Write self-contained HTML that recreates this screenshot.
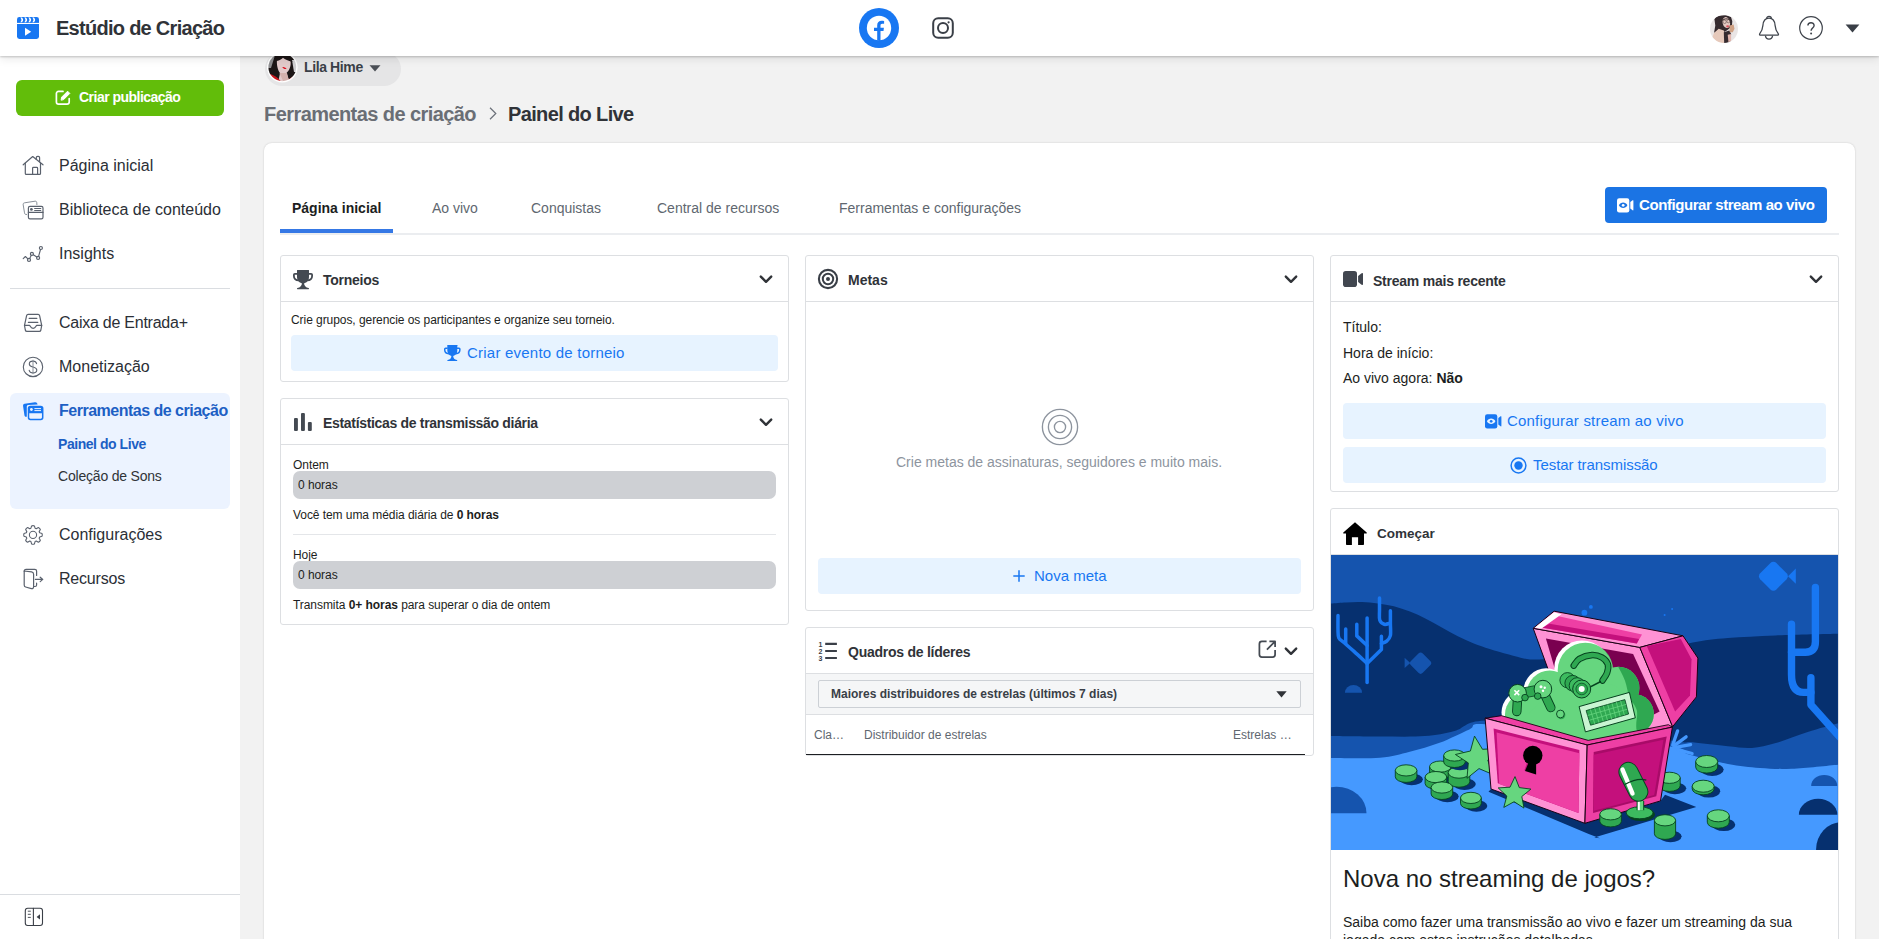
<!DOCTYPE html>
<html lang="pt-BR">
<head>
<meta charset="utf-8">
<title>Estúdio de Criação</title>
<style>
*{box-sizing:border-box;margin:0;padding:0}
html,body{width:1879px;height:939px;overflow:hidden;background:#f2f2f2;font-family:"Liberation Sans",sans-serif;color:#1c1e21}
.abs{position:absolute}
.t{position:absolute;white-space:nowrap;line-height:1}
#hdr{position:absolute;left:0;top:0;width:1879px;height:56px;background:#fff;box-shadow:0 1px 2px rgba(0,0,0,.2),0 3px 9px rgba(0,0,0,.09);z-index:10}
#side{position:absolute;left:0;top:56px;width:240px;height:883px;background:#fff;z-index:5}
#main{position:absolute;left:0;top:0;width:1879px;height:939px;overflow:hidden;z-index:1}
.nav{position:absolute;left:59px;font-size:16px;color:#2b2f36;white-space:nowrap;line-height:20px}
.ico{position:absolute;overflow:visible}
.w{position:absolute;background:#fff;border:1px solid #dddfe2;border-radius:3px}
.wh{position:absolute;left:0;right:0;top:0;height:46px;border-bottom:1px solid #dddfe2}
.wt{position:absolute;left:42px;top:15px;font-size:14px;font-weight:bold;color:#303338;white-space:nowrap;line-height:18px}
.btnl{position:absolute;background:#e7f3ff;border-radius:4px;color:#1877f2;font-size:15px;text-align:center;white-space:nowrap}
.wt2{font-size:14px;font-weight:bold;color:#303338}
.sm2{font-size:12px;letter-spacing:-0.06px;color:#1c1e21}
.sm{position:absolute;font-size:11.5px;color:#1c1e21;white-space:nowrap;line-height:14px}
.bar{position:absolute;left:11px;width:484px;height:28px;background:#ced0d4;border-radius:7px}
</style>
</head>
<body>

<!-- ================= HEADER ================= -->
<div id="hdr">
  <svg class="ico" style="left:17px;top:17px" width="22" height="22" viewBox="0 0 22 22">
    <rect x="0" y="0" width="22" height="22" rx="2.4" fill="#1877f2"/>
    <rect x="0" y="5.9" width="22" height="1.1" fill="#fff"/>
    <path d="M3.3 0.5 Q5.6 2.9 3.3 5.3 H5 Q7.3 2.9 5 0.5 Z M7.3 0.5 Q9.6 2.9 7.3 5.3 H9 Q11.3 2.9 9 0.5 Z M11.3 0.5 Q13.6 2.9 11.3 5.3 H13 Q15.3 2.9 13 0.5 Z M15.3 0.5 Q17.6 2.9 15.3 5.3 H17 Q19.3 2.9 17 0.5 Z" fill="#fff"/>
    <path d="M8 10.8 L14.2 14.8 L8 18.8 Z" fill="#fff"/>
  </svg>
  <div class="t" id="ttl" style="left:56px;top:18px;font-size:20px;font-weight:bold;color:#303338;letter-spacing:-0.72px">Estúdio de Criação</div>

  <!-- facebook -->
  <svg class="ico" style="left:859px;top:8px" width="40" height="40" viewBox="0 0 40 40">
    <circle cx="20" cy="20" r="20" fill="#1877f2"/>
    <circle cx="20" cy="20" r="12.2" fill="#fff"/>
    <path transform="translate(0 1.3)" d="M18.2 31 V21.6 h-3.2 v-3.2 h3.2 v-2.4 c0-3 1.8-4.6 4.4-4.6 1 0 2.2.1 2.5.2 v2.9 h-1.8 c-1.4 0-1.8.8-1.8 1.8 v2.1 h3.4 l-.4 3.2 h-3 V32 Z" fill="#1877f2"/>
  </svg>
  <!-- instagram -->
  <svg class="ico" style="left:932px;top:17px" width="22" height="22" viewBox="0 0 22 22" fill="none" stroke="#3a3f47" stroke-width="2">
    <rect x="1.2" y="1.2" width="19.6" height="19.6" rx="5"/>
    <circle cx="11" cy="11" r="5"/>
    <circle cx="16.6" cy="5.3" r="1.1" fill="#3a3f47" stroke="none"/>
  </svg>

  <!-- avatar -->
  <svg class="ico" style="left:1710.1px;top:14.9px" width="28" height="28" viewBox="0 0 28 28">
    <defs><clipPath id="av1"><circle cx="14" cy="14" r="14"/></clipPath><filter id="bl1" x="-10%" y="-10%" width="120%" height="120%"><feGaussianBlur stdDeviation="0.55"/></filter></defs>
    <g clip-path="url(#av1)"><g filter="url(#bl1)">
      <rect width="28" height="28" fill="#e9e5e5"/>
      <path d="M4.4 4 L6.6 1.5 L10.8 0.4 L16 0.2 L21 1.9 L22.3 6.2 L21.9 11.3 L19.4 13.4 L16.8 15.6 L13.8 17.3 L8.7 14.7 L4 18.1 L5.3 10.4 Z" fill="#352a2e"/>
      <ellipse cx="16.3" cy="7.6" rx="3.7" ry="5.6" transform="rotate(-14 16.3 7.6)" fill="#e3c8c2"/>
      <path d="M12.4 5.4 C14 3.6 17 3.4 19.4 4.6" stroke="#3a2c2c" stroke-width="1" fill="none"/>
      <circle cx="14.6" cy="6.8" r="1.7" fill="none" stroke="#4a3c3a" stroke-width=".5"/><circle cx="18.4" cy="6.2" r="1.6" fill="none" stroke="#4a3c3a" stroke-width=".5"/>
      <path d="M4 18.1 L8.7 13.8 L13.8 15.6 L15.1 19 L14.2 28.3 L7.9 27.5 L2.3 22.4 Z" fill="#e6c9bb"/>
      <path d="M13.8 17.3 L19.4 15.6 L21.1 19 L20.2 27.5 L14.2 28.3 Z" fill="#352a2e"/>
      <path d="M17.7 19.8 L21.1 19 L21.1 25.8 L18.5 27.5 Z" fill="#e2b6ae"/>
      <path d="M19.4 10.4 L23.6 9.6 L24.5 13.8 L22.8 17.3 L19.8 17.3 Z" fill="#cfa184"/>
      <ellipse cx="17.6" cy="11.3" rx="1.5" ry="1.1" fill="#d9525e"/>
    </g></g>
  </svg>
  <!-- bell -->
  <svg class="ico" style="left:1758px;top:15px" width="22" height="26" viewBox="0 0 22 26" fill="none" stroke="#3f444c" stroke-width="1.3">
    <path d="M11 3.2 C6.8 3.2 5.2 6.6 4.9 10.5 C4.6 14.5 3.4 16.6 1.8 18.6 C1.2 19.4 1.6 20.2 2.6 20.2 H19.4 C20.4 20.2 20.8 19.4 20.2 18.6 C18.6 16.6 17.4 14.5 17.1 10.5 C16.8 6.6 15.2 3.2 11 3.2 Z"/>
    <path d="M8.6 3.6 C8.6 0.6 13.4 0.6 13.4 3.6"/>
    <path d="M7.4 20.6 C8 25.2 14 25.2 14.6 20.6"/>
  </svg>
  <!-- help -->
  <svg class="ico" style="left:1799px;top:16px" width="24" height="24" viewBox="0 0 24 24" fill="none" stroke="#3f444c" stroke-width="1.2">
    <circle cx="12" cy="12" r="11.3"/>
    <path d="M8.9 9.6 C8.9 5.8 15.1 5.8 15.1 9.5 C15.1 12 12.1 12.2 12.1 14.8" stroke-width="1.4"/>
    <circle cx="12.1" cy="17.4" r="1" fill="#3f444c" stroke="none"/>
  </svg>
  <svg class="ico" style="left:1845px;top:24px" width="15" height="9" viewBox="0 0 15 9"><path d="M0.6 0.4 H14.4 L7.5 8.4 Z" fill="#3a3f47"/></svg>
</div>

<!-- ================= SIDEBAR ================= -->
<div id="side">
  <div class="abs" style="left:10px;top:337px;width:220px;height:116px;background:#ecf3ff;border-radius:6px"></div>
  <div class="abs" style="left:16px;top:24px;width:208px;height:36px;background:#62bd0a;border-radius:6px"></div>
  <svg class="ico" style="left:55px;top:33px" width="17" height="17" viewBox="0 0 17 17" fill="none" stroke="#fff" stroke-width="1.7" stroke-linecap="round" stroke-linejoin="round">
    <path d="M8 2.4 H3.6 C2.3 2.4 1.4 3.3 1.4 4.6 V13 C1.4 14.3 2.3 15.2 3.6 15.2 H12 C13.3 15.2 14.2 14.3 14.2 13 V9.6"/>
    <path d="M6.2 10.8 L6.6 8.2 L12.6 2.2 L14.8 4.4 L8.8 10.4 Z" fill="#fff" stroke-width="1"/>
  </svg>
  <div class="t" id="criar" style="left:79px;top:34px;font-size:14px;font-weight:bold;color:#fff;letter-spacing:-0.52px">Criar publicação</div>


  <svg class="ico" style="left:0;top:0" width="240" height="883" viewBox="0 56 240 883" fill="none" stroke="#5a616d" stroke-width="1.2" stroke-linecap="round" stroke-linejoin="round">
    <!-- home -->
    <path d="M23.2 164.8 L32.7 156.5 L43 164.8"/>
    <path d="M25.3 163.2 V173.4 Q25.3 174.4 26.3 174.4 H39.5 Q40.5 174.4 40.5 173.4 V163.2"/>
    <path d="M32.6 174.4 V168.2 Q32.6 167.4 33.4 167.4 H36.8 Q37.6 167.4 37.6 168.2 V174.4"/>
    <path d="M36.3 159.4 V157.6 Q36.3 156.3 37.6 156.3 H38.3 Q39.6 156.3 39.6 157.6 V161.8"/>
    <!-- library -->
    <rect x="28.4" y="206.3" width="14.6" height="12.5" rx="1.6"/>
    <path d="M28.4 212.4 H43"/>
    <circle cx="31.4" cy="209.4" r="1.4" fill="#5a616d" stroke="none"/>
    <path d="M34.6 208.5 H40.8 M34.6 210.5 H40.8" stroke-width="1"/>
    <path d="M26.6 214.5 C24.9 214.6 24.7 214 24.5 212.8 L23.2 204.9 C23 203.6 23.4 203 24.6 202.8 L35 201.2 C36.3 201 36.7 201.8 36.8 202.8 L36.9 204.6" stroke-width=".9" stroke="#7b828c"/>
    <!-- insights -->
    <path d="M23.2 258.6 L25.4 256.5 L27.9 258.8 M29.7 258.4 L31.3 255.3 M33.3 254.7 L36.8 257 M38.6 256.4 L40.5 249.5" stroke-width="1.1"/>
    <circle cx="29" cy="259.9" r="1.5"/><circle cx="31.9" cy="253.9" r="1.5"/><circle cx="38.1" cy="257.9" r="1.5"/><circle cx="40.9" cy="248" r="1.5"/>
    <!-- inbox -->
    <path d="M24.5 325.3 L26.6 315.6 Q26.9 314.4 28.1 314.4 H38.1 Q39.3 314.4 39.6 315.6 L41.7 325.3"/>
    <path d="M24.5 325.3 H29.4 C30.4 325.3 30.2 328.3 33.1 328.3 C36 328.3 35.8 325.3 36.8 325.3 H41.7 L40.9 330 Q40.6 331.4 39.2 331.4 H27 Q25.6 331.4 25.3 330 Z"/>
    <path d="M29.2 318.4 H36.8 M28.4 322.4 H37.8"/>
    <!-- dollar -->
    <circle cx="33" cy="366.9" r="9.7" stroke-width="1.1"/>
    <path d="M36.6 363.6 C36.2 361.9 34.7 361.1 33 361.1 C30.9 361.1 29.3 362.2 29.3 363.9 C29.3 368 36.8 365.9 36.8 370 C36.8 371.8 35.1 372.9 33 372.9 C31.1 372.9 29.6 372 29.2 370.3" stroke-width="1.1"/>
    <path d="M33 360.2 V373.8" stroke-width="1" stroke="#8a9099"/>
    <!-- gear -->
    <path d="M30.93 528.21 L31.60 525.91 Q33.00 525.25 34.40 525.91 L35.07 528.21 A7.0 7.0 0 0 1 36.27 528.71 L36.27 528.71 L38.36 527.55 Q39.82 528.08 40.35 529.54 L39.19 531.63 A7.0 7.0 0 0 1 39.69 532.83 L39.69 532.83 L41.99 533.50 Q42.65 534.90 41.99 536.30 L39.69 536.97 A7.0 7.0 0 0 1 39.19 538.17 L39.19 538.17 L40.35 540.26 Q39.82 541.72 38.36 542.25 L36.27 541.09 A7.0 7.0 0 0 1 35.07 541.59 L35.07 541.59 L34.40 543.89 Q33.00 544.55 31.60 543.89 L30.93 541.59 A7.0 7.0 0 0 1 29.73 541.09 L29.73 541.09 L27.64 542.25 Q26.18 541.72 25.65 540.26 L26.81 538.17 A7.0 7.0 0 0 1 26.31 536.97 L26.31 536.97 L24.01 536.30 Q23.35 534.90 24.01 533.50 L26.31 532.83 A7.0 7.0 0 0 1 26.81 531.63 L26.81 531.63 L25.65 529.54 Q26.18 528.08 27.64 527.55 L29.73 528.71 A7.0 7.0 0 0 1 30.93 528.21 Z" stroke-width="1.1"/>
    <circle cx="33" cy="534.9" r="3.6" stroke-width="1.1"/>
    <!-- door -->
    <path d="M24.2 571.2 Q24.2 569.3 26.1 569.3 H34.8 Q36.6 569.3 36.6 571.1 V575.5"/>
    <path d="M36.6 583.2 V585 Q36.6 586.5 35.1 586.5 H33.8"/>
    <path d="M24.2 571 L31.6 571.8 Q33.6 572.2 33.6 574.2 V586.6 Q33.6 589 31.4 588.6 L25.6 587 Q24.2 586.6 24.2 585 Z"/>
    <path d="M35.4 579.4 H42.6 M40.2 577.2 L42.8 579.4 L40.2 581.6"/>
    <!-- collapse -->
    <rect x="25.3" y="908.3" width="17.2" height="17.2" rx="2.4" stroke="#3a3f47" stroke-width="1.1"/>
    <path d="M33.4 908.3 V925.5" stroke="#3a3f47" stroke-width="1.1"/>
    <path d="M27.8 911.2 H30.8 M27.8 914.3 H30.8 M27.8 917.4 H30.8" stroke="#3a3f47" stroke-width=".9" stroke-linecap="butt"/>
    <path d="M36.6 916.9 L40 914.2 V919.6 Z" fill="#3a3f47" stroke="none"/>
  </svg>
  <!-- active icon -->
  <svg class="ico" style="left:0;top:0" width="240" height="883" viewBox="0 56 240 883">
    <path d="M26.8 416.8 C24.9 417 24.6 416.2 24.4 415 L23.1 406.2 C22.9 404.9 23.4 404 24.7 403.8 L34.9 402.2 C36.3 402 37.2 402.6 37.6 404.4 L28 404.9 Q26.8 405 26.8 406.2 Z" fill="#1877f2"/>
    <rect x="28.5" y="406.4" width="14.2" height="13" rx="1.9" fill="none" stroke="#1877f2" stroke-width="1.5"/>
    <path d="M28.5 408.3 Q28.5 406.4 30.4 406.4 H40.8 Q42.7 406.4 42.7 408.3 V413.2 H28.5 Z" fill="#1877f2"/>
    <circle cx="31.4" cy="409.5" r="1.4" fill="#eaf3ff"/>
    <path d="M34.4 408.6 H41 M34.4 410.6 H41" stroke="#eaf3ff" stroke-width="1"/>
  </svg>
  <!-- nav text -->
  <div class="nav" id="n1" style="top:100px">Página inicial</div>
  <div class="nav" id="n2" style="top:144px">Biblioteca de conteúdo</div>
  <div class="nav" id="n3" style="top:188px">Insights</div>
  <div class="abs" style="left:10px;top:232px;width:220px;height:1px;background:#dadde1"></div>
  <div class="nav" id="n4" style="letter-spacing:-0.25px;top:257px">Caixa de Entrada+</div>
  <div class="nav" id="n5" style="top:301px">Monetização</div>
  <div class="nav" id="n6" style="letter-spacing:-0.5px;top:345px;font-weight:bold;color:#1d5fc4">Ferramentas de criação</div>
  <div class="nav" id="n7" style="letter-spacing:-0.45px;top:378px;left:58px;font-size:14px;font-weight:bold;color:#1d5fc4">Painel do Live</div>
  <div class="nav" id="n8" style="letter-spacing:-0.2px;top:410px;left:58px;font-size:14px;color:#303338">Coleção de Sons</div>
  <div class="nav" id="n9" style="top:469px">Configurações</div>
  <div class="nav" id="n10" style="letter-spacing:-0.2px;top:513px">Recursos</div>

  <div class="abs" style="left:0;top:838px;width:240px;height:1px;background:#dadde1"></div>
</div>

<!-- ================= MAIN ================= -->
<div id="main">
  <!-- page selector pill -->
  <div class="abs" style="left:265px;top:51.5px;width:136px;height:34px;border-radius:17px;background:#e5e5e6"></div>
  <svg class="ico" style="left:267.2px;top:52.2px" width="30.6" height="30.6" viewBox="0 0 30.6 30.6">
    <defs><clipPath id="av2"><circle cx="15.3" cy="15.3" r="13.9"/></clipPath><filter id="bl2" x="-10%" y="-10%" width="120%" height="120%"><feGaussianBlur stdDeviation="0.5"/></filter></defs>
    <circle cx="15.3" cy="15.3" r="15.3" fill="#fff"/>
    <g clip-path="url(#av2)"><g filter="url(#bl2)">
      <rect width="30.6" height="30.6" fill="#1b1517"/>
      <path d="M0 0 H9 L4 16 H0 Z" fill="#8e8e90"/>
      <path d="M25 8 H31 V20 H27 Z" fill="#cfcfd1"/>
      <path d="M10 8 C11 4 22 4 23.5 9 C24.5 14 22 19 19.5 21 L23 31 H11 L13 21 C10.5 18 9.5 12 10 8 Z" fill="#e2caca"/>
      <path d="M8 9 C10 3 23 2 25.5 10 C21 8.6 18 7.6 16 5.8 C14 8 11 9.4 8 9 Z" fill="#1b1517"/>
      <path d="M12.5 21 L17 31 H22.5 L20 21 Z" fill="#d4b1ad"/>
      <path d="M3 22 C7 23 12 26 15 31 H2 Z" fill="#c9141f"/>
      <path d="M22 27 L27 24 L28 31 H21 Z" fill="#c9141f"/>
      <path d="M15.4 15.3 C16.6 14.6 18.2 15.6 19.6 16.9 C18 17.4 16.2 16.8 15.4 15.3 Z" fill="#dd0f1e"/>
    </g></g>
  </svg>
  <div class="t" id="lila" style="left:304px;top:60px;font-size:14px;font-weight:bold;color:#3a3f47;letter-spacing:-0.38px">Lila Hime</div>
  <svg class="ico" style="left:369px;top:65px" width="12" height="7" viewBox="0 0 12 7"><path d="M0.5 0.3 H11.5 L6 6.6 Z" fill="#4b4f56"/></svg>

  <!-- breadcrumb -->
  <div class="t" id="bc1" style="left:264px;top:104px;font-size:20px;font-weight:bold;color:#6a6e75;letter-spacing:-0.57px">Ferramentas de criação</div>
  <svg class="ico" style="left:489px;top:107px" width="8" height="13" viewBox="0 0 8 13" fill="none" stroke="#6b7079" stroke-width="1.2"><path d="M1 0.8 L6.8 6.5 L1 12.2"/></svg>
  <div class="t" id="bc2" style="left:508px;top:104px;font-size:20px;font-weight:bold;color:#303338;letter-spacing:-0.64px">Painel do Live</div>

  <!-- big card -->
  <div id="card" class="abs" style="left:264px;top:143px;width:1591px;height:820px;background:#fff;border-radius:8px;box-shadow:0 0 2px rgba(0,0,0,.18)"></div>

  <!-- TABS -->
  <div class="t" id="tb1" style="left:292px;top:201px;font-size:14px;font-weight:bold;color:#1c1e21">Página inicial</div>
  <div class="t" id="tb2" style="left:432px;top:201px;font-size:14px;color:#606770">Ao vivo</div>
  <div class="t" id="tb3" style="left:531px;top:201px;font-size:14px;color:#606770">Conquistas</div>
  <div class="t" id="tb4" style="left:657px;top:201px;font-size:14px;color:#606770">Central de recursos</div>
  <div class="t" id="tb5" style="left:839px;top:201px;font-size:14px;color:#606770">Ferramentas e configurações</div>
  <div class="abs" style="left:280px;top:233px;width:1559px;height:1.5px;background:#ebedf0"></div>
  <div class="abs" style="left:280px;top:229px;width:113px;height:4px;background:#3578e5"></div>

  <!-- top button -->
  <div class="abs" style="left:1605px;top:187px;width:222px;height:36px;background:#1b74e4;border-radius:4px"></div>
  <svg class="ico" style="left:1617px;top:198px" width="17" height="15" viewBox="0 0 17 15" fill="#fff">
    <rect x="0" y="0.2" width="12.3" height="14.2" rx="2.2"/><path d="M13.3 4 L15.6 2.3 Q16.4 1.9 16.4 2.8 V11.8 Q16.4 12.7 15.6 12.3 L13.3 10.6 Z"/>
    <path d="M1.9 7.3 C3.6 3.6 8.7 3.6 10.4 7.3 C8.7 11 3.6 11 1.9 7.3 Z" fill="#1b74e4"/><circle cx="6.15" cy="7.3" r="1.35"/>
  </svg>
  <div class="t" id="topbtn" style="left:1639px;top:196.7px;font-size:15px;font-weight:bold;color:#fff;letter-spacing:-0.42px">Configurar stream ao vivo</div>


  <!-- ===== Torneios ===== -->
  <div class="w" style="left:280px;top:255px;width:509px;height:127px"></div>
  <div class="abs" style="left:281px;top:301px;width:507px;height:1px;background:#dddfe2"></div>
  <svg class="ico" style="left:293px;top:270px" width="20" height="19.2" viewBox="0 0 20 19.2" fill="#444a52">
    <path d="M4 0.3 Q4 0 4.3 0 H15.7 Q16 0 16 0.3 V7 C16 10.8 13.6 13 10 13.6 C6.4 13 4 10.8 4 7 Z"/>
    <path d="M4.4 3.8 H1.9 Q0.9 3.8 0.9 4.8 V6 C0.9 8.6 2.8 10.3 5.8 10.4 M15.6 3.8 H18.1 Q19.1 3.8 19.1 4.8 V6 C19.1 8.6 17.2 10.3 14.2 10.4" fill="none" stroke="#444a52" stroke-width="1.8"/>
    <path d="M9 12.6 C9 15.8 7.2 17.7 4.4 18 Q4 18.05 4 18.5 V18.8 Q4 19.2 4.4 19.2 H15.6 Q16 19.2 16 18.8 V18.5 Q16 18.05 15.6 18 C12.8 17.7 11 15.8 11 12.6 Z"/>
  </svg>
  <div class="t wt2" id="w1t" style="left:323px;top:272.5px;letter-spacing:-0.25px">Torneios</div>
  <svg class="ico" style="left:759px;top:275px" width="14" height="9" viewBox="0 0 14 9" fill="none" stroke="#303338" stroke-width="2.4" stroke-linecap="round" stroke-linejoin="round"><path d="M1.8 1.6 L7 6.8 L12.2 1.6"/></svg>
  <div class="t" id="w1d" style="left:291px;top:314px;font-size:12px;color:#1c1e21;letter-spacing:-0.06px">Crie grupos, gerencie os participantes e organize seu torneio.</div>
  <div class="abs" style="left:291px;top:335px;width:487px;height:36px;background:#e7f3ff;border-radius:4px"></div>
  <svg class="ico" style="left:444.3px;top:345px" width="16.6" height="16" viewBox="0 0 20 19.2" fill="#1877f2">
    <path d="M4 0.3 Q4 0 4.3 0 H15.7 Q16 0 16 0.3 V7 C16 10.8 13.6 13 10 13.6 C6.4 13 4 10.8 4 7 Z"/>
    <path d="M4.4 3.8 H1.9 Q0.9 3.8 0.9 4.8 V6 C0.9 8.6 2.8 10.3 5.8 10.4 M15.6 3.8 H18.1 Q19.1 3.8 19.1 4.8 V6 C19.1 8.6 17.2 10.3 14.2 10.4" fill="none" stroke="#1877f2" stroke-width="1.8"/>
    <path d="M9 12.6 C9 15.8 7.2 17.7 4.4 18 Q4 18.05 4 18.5 V18.8 Q4 19.2 4.4 19.2 H15.6 Q16 19.2 16 18.8 V18.5 Q16 18.05 15.6 18 C12.8 17.7 11 15.8 11 12.6 Z"/>
  </svg>
  <div class="t" id="w1b" style="left:467px;top:345px;font-size:15px;color:#1877f2;letter-spacing:0.22px">Criar evento de torneio</div>

  <!-- ===== Estatísticas ===== -->
  <div class="w" style="left:280px;top:398px;width:509px;height:227px"></div>
  <div class="abs" style="left:281px;top:444px;width:507px;height:1px;background:#dddfe2"></div>
  <svg class="ico" style="left:294px;top:413px" width="18" height="18" viewBox="0 0 18 18" fill="#444a52">
    <rect x="0" y="5" width="3.9" height="13" rx="1.1"/><rect x="7" y="0" width="3.9" height="18" rx="1.1"/><rect x="13.9" y="9" width="3.9" height="9" rx="1.1"/>
  </svg>
  <div class="t wt2" id="w2t" style="left:323px;top:415.5px;letter-spacing:-0.32px">Estatísticas de transmissão diária</div>
  <svg class="ico" style="left:759px;top:418px" width="14" height="9" viewBox="0 0 14 9" fill="none" stroke="#303338" stroke-width="2.4" stroke-linecap="round" stroke-linejoin="round"><path d="M1.8 1.6 L7 6.8 L12.2 1.6"/></svg>
  <div class="t sm2" id="w2a" style="left:293px;top:459px">Ontem</div>
  <div class="abs" style="left:293px;top:471px;width:483px;height:28px;background:#ced0d4;border-radius:7px"></div>
  <div class="t sm2" id="w2b" style="left:298px;top:479px">0 horas</div>
  <div class="t sm2" id="w2c" style="left:293px;top:509px">Você tem uma média diária de <b>0 horas</b></div>
  <div class="abs" style="left:293px;top:534px;width:483px;height:1px;background:#e4e6e9"></div>
  <div class="t sm2" id="w2d" style="left:293px;top:549px">Hoje</div>
  <div class="abs" style="left:293px;top:561px;width:483px;height:28px;background:#ced0d4;border-radius:7px"></div>
  <div class="t sm2" id="w2e" style="left:298px;top:569px">0 horas</div>
  <div class="t sm2" id="w2f" style="left:293px;top:599px">Transmita <b>0+ horas</b> para superar o dia de ontem</div>

  <!-- ===== Metas ===== -->
  <div class="w" style="left:805px;top:255px;width:509px;height:356px"></div>
  <div class="abs" style="left:806px;top:301px;width:507px;height:1px;background:#dddfe2"></div>
  <svg class="ico" style="left:817px;top:268px" width="22" height="22" viewBox="0 0 22 22" fill="none" stroke="#3a3f47">
    <circle cx="11" cy="11" r="9.1" stroke-width="2.1"/><circle cx="11" cy="11" r="5.2" stroke-width="2"/><circle cx="11" cy="11" r="2" fill="#3a3f47" stroke="none"/>
  </svg>
  <div class="t wt2" id="w3t" style="left:848px;top:272.5px;letter-spacing:0px">Metas</div>
  <svg class="ico" style="left:1284px;top:275px" width="14" height="9" viewBox="0 0 14 9" fill="none" stroke="#303338" stroke-width="2.4" stroke-linecap="round" stroke-linejoin="round"><path d="M1.8 1.6 L7 6.8 L12.2 1.6"/></svg>
  <svg class="ico" style="left:1041px;top:408px" width="38" height="38" viewBox="0 0 38 38" fill="none" stroke="#8d949e" stroke-width="1.35">
    <circle cx="19" cy="19" r="17.6"/><circle cx="19" cy="19" r="11.6"/><circle cx="19" cy="19" r="5.6"/>
  </svg>
  <div class="t" id="w3d" style="left:896px;top:455px;font-size:14px;color:#8d949e">Crie metas de assinaturas, seguidores e muito mais.</div>
  <div class="abs" style="left:818px;top:558px;width:483px;height:36px;background:#e7f3ff;border-radius:4px"></div>
  <svg class="ico" style="left:1013px;top:570px" width="12" height="12" viewBox="0 0 12 12" stroke="#1877f2" stroke-width="1.5"><path d="M6 0.3 V11.7 M0.3 6 H11.7"/></svg>
  <div class="t" id="w3b" style="left:1034px;top:568px;font-size:15px;color:#1877f2">Nova meta</div>

  <!-- ===== Quadros de líderes ===== -->
  <div class="w" style="left:805px;top:627px;width:509px;height:129px"></div>
  <div class="abs" style="left:806px;top:673px;width:507px;height:42px;background:#f5f6f7;border-top:1px solid #dddfe2;border-bottom:1px solid #dddfe2"></div>
  <svg class="ico" style="left:818px;top:640px" width="20" height="23" viewBox="0 0 20 23">
    <path d="M7.2 3.9 H18.9 M7.2 11 H18.9 M7.2 18 H18.9" stroke="#3a3f47" stroke-width="2.1" fill="none"/>
    <text x="0.6" y="6.9" font-family="Liberation Sans, sans-serif" font-size="7" font-weight="bold" fill="#3a3f47">1</text>
    <text x="0.6" y="13.9" font-family="Liberation Sans, sans-serif" font-size="7" font-weight="bold" fill="#3a3f47">2</text>
    <text x="0.6" y="21" font-family="Liberation Sans, sans-serif" font-size="7" font-weight="bold" fill="#3a3f47">3</text>
  </svg>
  <div class="t wt2" id="w4t" style="left:848px;top:644.6px;letter-spacing:-0.25px">Quadros de líderes</div>
  <svg class="ico" style="left:1257.6px;top:639.6px" width="19" height="19" viewBox="0 0 19 19" fill="none" stroke="#444a52" stroke-width="1.75" stroke-linejoin="round">
    <path d="M8.6 1.4 H3.9 Q1.4 1.4 1.4 3.9 V14.6 Q1.4 17.1 3.9 17.1 H14.6 Q17.1 17.1 17.1 14.6 V10"/>
    <path d="M11.4 1.4 H17.1 V7.1 M17.1 1.4 L8.9 9.6"/>
  </svg>
  <svg class="ico" style="left:1284px;top:646.8px" width="14" height="9" viewBox="0 0 14 9" fill="none" stroke="#303338" stroke-width="2.4" stroke-linecap="round" stroke-linejoin="round"><path d="M1.8 1.6 L7 6.8 L12.2 1.6"/></svg>
  <div class="abs" style="left:818px;top:680px;width:483px;height:28px;background:#f5f6f7;border:1px solid #ccd0d5;border-radius:2px"></div>
  <div class="t" id="w4s" style="left:831px;top:688px;font-size:12px;font-weight:bold;color:#3a3f47">Maiores distribuidores de estrelas (últimos 7 dias)</div>
  <svg class="ico" style="left:1276px;top:691px" width="11" height="7" viewBox="0 0 11 7"><path d="M0.3 0.3 H10.7 L5.5 6.6 Z" fill="#303338"/></svg>
  <div class="t" id="w4a" style="left:814px;top:729px;font-size:12px;color:#606770">Cla…</div>
  <div class="t" id="w4b" style="left:864px;top:729px;font-size:12px;color:#606770">Distribuidor de estrelas</div>
  <div class="t" id="w4c" style="left:1233px;top:729px;font-size:12px;color:#606770">Estrelas …</div>
  <div class="abs" style="left:806px;top:754px;width:499px;height:1px;background:#1c1e21"></div>

  <!-- ===== Stream mais recente ===== -->
  <div class="w" style="left:1330px;top:255px;width:509px;height:237px"></div>
  <div class="abs" style="left:1331px;top:301px;width:507px;height:1px;background:#dddfe2"></div>
  <svg class="ico" style="left:1343px;top:271px" width="21" height="16" viewBox="0 0 21 16" fill="#41464f">
    <rect x="0" y="0" width="14" height="16" rx="2.8"/><path d="M15.1 4.9 L18.6 2.3 Q20 1.6 20 3 V13 Q20 14.4 18.6 13.7 L15.1 11.1 Z"/>
  </svg>
  <div class="t wt2" id="w5t" style="left:1373px;top:273.5px;letter-spacing:-0.23px">Stream mais recente</div>
  <svg class="ico" style="left:1809px;top:275px" width="14" height="9" viewBox="0 0 14 9" fill="none" stroke="#303338" stroke-width="2.4" stroke-linecap="round" stroke-linejoin="round"><path d="M1.8 1.6 L7 6.8 L12.2 1.6"/></svg>
  <div class="t" id="w5a" style="left:1343px;top:320px;font-size:14px;color:#1c1e21">Título:</div>
  <div class="t" id="w5b" style="left:1343px;top:346px;font-size:14px;color:#1c1e21">Hora de início:</div>
  <div class="t" id="w5c" style="left:1343px;top:371px;font-size:14px;color:#1c1e21">Ao vivo agora: <b>Não</b></div>
  <div class="abs" style="left:1343px;top:403px;width:483px;height:36px;background:#e7f3ff;border-radius:4px"></div>
  <svg class="ico" style="left:1485px;top:413.5px" width="17" height="15" viewBox="0 0 17 15" fill="#1877f2">
    <rect x="0" y="0.2" width="12.3" height="14.2" rx="2.2"/><path d="M13.3 4 L15.6 2.3 Q16.4 1.9 16.4 2.8 V11.8 Q16.4 12.7 15.6 12.3 L13.3 10.6 Z"/>
    <path d="M1.9 7.3 C3.6 3.6 8.7 3.6 10.4 7.3 C8.7 11 3.6 11 1.9 7.3 Z" fill="#e7f3ff"/><circle cx="6.15" cy="7.3" r="1.35"/>
  </svg>
  <div class="t" id="w5d" style="left:1507px;top:413px;font-size:15px;color:#1877f2;letter-spacing:0.2px">Configurar stream ao vivo</div>
  <div class="abs" style="left:1343px;top:447px;width:483px;height:36px;background:#e7f3ff;border-radius:4px"></div>
  <svg class="ico" style="left:1510px;top:457px" width="17" height="17" viewBox="0 0 17 17" fill="none" stroke="#1877f2" stroke-width="1.5"><circle cx="8.5" cy="8.5" r="7.4"/><circle cx="8.5" cy="8.5" r="4.2" fill="#1877f2" stroke="none"/></svg>
  <div class="t" id="w5e" style="left:1533px;top:457px;font-size:15px;color:#1877f2;letter-spacing:-0.07px">Testar transmissão</div>

  <!-- ===== Começar ===== -->
  <div class="w" style="left:1330px;top:508px;width:509px;height:460px"></div>
  <svg class="ico" style="left:1343px;top:521.8px" width="24" height="23.2" viewBox="0 0 24 23.2" fill="#000">
    <path d="M12 0.2 L23.7 10.5 Q24.3 11.4 23.3 11.4 H21 V22.3 Q21 23.1 20.2 23.1 H15.1 V15.2 H8.9 V23.1 H3.8 Q3 23.1 3 22.3 V11.4 H0.7 Q-0.3 11.4 0.3 10.5 Z"/>
  </svg>
  <div class="abs" style="left:1331px;top:554px;width:507px;height:1px;background:#dddfe2"></div>
  <div class="t" id="w6t" style="left:1377px;top:526.5px;font-size:13.5px;font-weight:bold;color:#303338">Começar</div>
<!--ILLUS_START-->
<svg class="ico" style="left:1331px;top:555px;overflow:hidden" width="507" height="295" viewBox="0 0 507 295">
<rect width="507" height="295" fill="#1554ae"/>
<path d="M-1.0 48.5 C1.7 48.3 9.7 47.6 15.0 47.4 C20.3 47.2 25.6 46.9 30.9 47.1 C36.2 47.3 41.6 47.7 46.9 48.4 C52.2 49.1 57.6 49.9 62.9 51.2 C68.2 52.6 73.6 54.4 78.9 56.5 C84.2 58.6 89.5 61.0 94.8 63.7 C100.1 66.4 105.5 69.6 110.8 72.5 C116.1 75.4 121.5 78.6 126.8 81.3 C132.1 84.0 137.5 86.4 142.8 88.5 C148.1 90.6 152.8 92.2 158.7 94.0 C164.5 95.8 171.2 97.9 177.9 99.6 C184.6 101.3 190.9 103.7 199.0 104.4 C207.1 105.1 213.7 103.8 226.4 103.8 C239.1 103.8 258.9 105.1 275.2 104.2 C291.4 103.3 309.5 101.1 323.9 98.3 C338.3 95.5 349.6 90.1 361.8 87.6 C374.0 85.1 383.1 84.3 396.9 83.1 C410.7 81.9 426.5 81.1 444.8 80.4 C463.1 79.7 496.5 79.1 506.8 78.8 L507 295 L0 295 Z" fill="#06306f"/>
<path d="M0 181 C8.2 181.1 33.4 181.5 49.0 181.5 C64.6 181.5 81.3 182.0 93.7 181.1 C106.1 180.2 113.4 178.5 123.5 175.9 C133.6 173.3 133.0 166.4 154.1 165.4 C175.2 164.4 218.5 166.6 250 170 C281.5 173.4 324.4 183.1 343 186 C361.6 188.9 352.8 186.4 361.8 187.3 C370.8 188.2 387.0 190.4 396.9 191.3 C406.8 192.2 412.9 193.4 420.9 192.9 C428.9 192.4 435.5 190.8 444.8 188.1 C454.1 185.4 466.3 180.2 476.7 176.9 C487.1 173.6 501.9 169.6 507 168.2 L507 295 L0 295 Z" fill="#1554ae"/>
<path d="M0 203 C8.2 202.9 35.9 203.8 49.0 202.7 C62.1 201.6 68.9 199.2 78.8 196.7 C88.7 194.2 98.7 191.5 108.6 187.8 C118.5 184.1 130.8 177.5 138.4 174.4 C146.0 171.3 135.5 168.3 154.1 169.2 C172.7 170.1 218.5 176.2 250 180 C281.5 183.8 325.2 188.8 343 192 C360.8 195.2 348.0 196.5 357.0 199.3 C366.0 202.1 384.9 206.6 396.9 208.9 C408.9 211.2 418.1 212.1 428.8 212.9 C439.5 213.7 447.8 214.2 460.8 213.7 C473.8 213.2 499.1 210.4 506.8 209.7 L507 295 L0 295 Z" fill="#4599ff"/>
<path d="M-24.5 258.2 A30.0 26.5 0 0 1 35.5 258.2 Z" fill="#1554ae"/>
<path d="M13.9 137.7 A8.6 7.8 0 0 1 31.1 137.7 Z" fill="#1554ae"/>
<path d="M480.2 230.9 A13.0 11.0 0 0 1 506.2 230.9 Z" fill="#1554ae"/>
<path d="M467.9 259.7 A19.2 16.0 0 0 1 506.3 259.7 Z" fill="#06306f"/>
<ellipse cx="510.6" cy="294.3" rx="25.5" ry="27" fill="#06306f"/>
<rect x="430.9" y="9.8" width="22.9" height="22.9" rx="4.2" transform="rotate(45 442.4 21.3)" fill="#1877f2"/><path d="M457.1 21.3 L464.8 13.6 V28.7 Z" fill="#1877f2"/>
<rect x="81.3" y="99.8" width="16.7" height="16.7" rx="3.1" transform="rotate(45 89.6 108.1)" fill="#1554ae"/><path d="M79.3 108.1 L73.6 102.8 V113.1 Z" fill="#1554ae"/>
<circle cx="253.4" cy="57.7" r="2.9" fill="#1877f2"/>
<circle cx="259.9" cy="51.9" r="1.9" fill="#1877f2"/>
<circle cx="333.6" cy="60.0" r="1.0" fill="#1877f2"/>
<circle cx="341.1" cy="54.1" r="1.0" fill="#1877f2"/>
<path d="M36.1 127.6 L36.1 62.9" fill="none" stroke="#1877f2" stroke-width="3.5" stroke-linecap="round" stroke-linejoin="round"/>
<path d="M36.1 108.4 C33.9 106.4 26.9 99.9 23.0 96.4 C19.1 92.9 15.1 89.5 12.6 87.3 C10.1 85.0 8.7 85.0 7.8 82.9 C6.9 80.8 7.1 78.6 7.0 74.9 C6.9 71.2 7.0 62.9 7.0 60.5" fill="none" stroke="#1877f2" stroke-width="3.5" stroke-linecap="round"/>
<path d="M14.7 74.1 L14.7 88.5" fill="none" stroke="#1877f2" stroke-width="3.5" stroke-linecap="round" stroke-linejoin="round"/>
<path d="M36.1 90.5 L25.8 80.9 L25.8 69.3" fill="none" stroke="#1877f2" stroke-width="3.5" stroke-linecap="round" stroke-linejoin="round"/>
<path d="M36.1 108.4 L50.4 94.4 L50.4 81.3" fill="none" stroke="#1877f2" stroke-width="3.5" stroke-linecap="round" stroke-linejoin="round"/>
<path d="M50.4 88.5 C51.3 88.1 54.2 87.4 55.7 86.1 C57.2 84.8 58.8 83.4 59.4 80.5 C60.0 77.6 59.4 72.6 59.4 68.5 C59.4 64.4 59.4 57.8 59.4 55.7" fill="none" stroke="#1877f2" stroke-width="3.5" stroke-linecap="round"/>
<path d="M48.5 42.9 C48.5 45.0 48.5 52.0 48.5 55.7 C48.5 59.4 48.0 63.0 48.8 65.3 C49.6 67.6 51.6 68.8 53.3 69.3 C55.0 69.8 58.0 68.4 58.9 68.2" fill="none" stroke="#1877f2" stroke-width="3.5" stroke-linecap="round"/>
<path d="M484.4 32.5 V86.8 Q484.4 97.2 474.4 97.2 H460.5" fill="none" stroke="#1877f2" stroke-width="7.4" stroke-linecap="round"/>
<path d="M460.5 69.3 V119.6 Q460.5 137.4 472.5 137.4 H479.9" fill="none" stroke="#1877f2" stroke-width="7.4" stroke-linecap="round"/>
<path d="M479.9 122.7 V149.8 L508.7 182.0" fill="none" stroke="#1877f2" stroke-width="7.4" stroke-linecap="round" stroke-linejoin="round"/>
<path d="M341.7 190.0 L346.6 175.9" fill="none" stroke="#4599ff" stroke-width="3.3" stroke-linecap="round" stroke-linejoin="round"/>
<path d="M342.9 190.8 L355.1 181.8" fill="none" stroke="#4599ff" stroke-width="3.3" stroke-linecap="round" stroke-linejoin="round"/>
<path d="M344.4 192.3 L359.6 189.6" fill="none" stroke="#4599ff" stroke-width="3.3" stroke-linecap="round" stroke-linejoin="round"/>
<path d="M347.4 194.9 L361.1 198.5" fill="none" stroke="#4599ff" stroke-width="3.3" stroke-linecap="round" stroke-linejoin="round"/>
<path d="M160.0 234.0 L157.5 236.7 L257.7 279.0 L269.0 283.2 L263.2 282.6 L365.3 251.9 L334.0 239.7 L329.5 245.9 L253.9 268.3 Z" fill="#06306f"/>
<ellipse cx="80.6" cy="224.3" rx="11.3" ry="5.8999999999999995" fill="#06306f"/><path d="M64.3 215.4 V221.8 A10.8 5.6 0 0 0 85.89999999999999 221.8 V215.4 Z" fill="#2fa851" stroke="#06421f" stroke-width=".9"/><ellipse cx="75.1" cy="215.4" rx="10.8" ry="5.6" fill="#66d67f" stroke="#06421f" stroke-width=".9"/>
<ellipse cx="114.9" cy="220.5" rx="11.3" ry="5.8999999999999995" fill="#06306f"/><path d="M98.60000000000001 211.6 V218.0 A10.8 5.6 0 0 0 120.2 218.0 V211.6 Z" fill="#2fa851" stroke="#06421f" stroke-width=".9"/><ellipse cx="109.4" cy="211.6" rx="10.8" ry="5.6" fill="#66d67f" stroke="#06421f" stroke-width=".9"/>
<ellipse cx="110.4" cy="231.0" rx="11.3" ry="5.8999999999999995" fill="#06306f"/><path d="M94.10000000000001 222.1 V228.5 A10.8 5.6 0 0 0 115.7 228.5 V222.1 Z" fill="#2fa851" stroke="#06421f" stroke-width=".9"/><ellipse cx="104.9" cy="222.1" rx="10.8" ry="5.6" fill="#66d67f" stroke="#06421f" stroke-width=".9"/>
<ellipse cx="133.5" cy="229.1" rx="11.3" ry="5.8999999999999995" fill="#06306f"/><path d="M117.2 217.6 V226.6 A10.8 5.6 0 0 0 138.8 226.6 V217.6 Z" fill="#2fa851" stroke="#06421f" stroke-width=".9"/><ellipse cx="128.0" cy="217.6" rx="10.8" ry="5.6" fill="#66d67f" stroke="#06421f" stroke-width=".9"/>
<ellipse cx="129.0" cy="209.4" rx="11.3" ry="5.8999999999999995" fill="#06306f"/><path d="M112.7 200.5 V206.9 A10.8 5.6 0 0 0 134.3 206.9 V200.5 Z" fill="#2fa851" stroke="#06421f" stroke-width=".9"/><ellipse cx="123.5" cy="200.5" rx="10.8" ry="5.6" fill="#66d67f" stroke="#06421f" stroke-width=".9"/>
<path d="M143.5 181.1 L151.5 194.3 L166.8 193.5 L156.8 205.2 L162.2 219.6 L148.0 213.6 L136.0 223.3 L137.3 207.9 L124.4 199.5 L139.4 196.0 Z" fill="#66d67f" stroke="#06421f" stroke-width="0.9" stroke-linejoin="round"/>
<ellipse cx="116.4" cy="241.4" rx="11.3" ry="5.8999999999999995" fill="#06306f"/><path d="M100.10000000000001 232.5 V238.9 A10.8 5.6 0 0 0 121.7 238.9 V232.5 Z" fill="#2fa851" stroke="#06421f" stroke-width=".9"/><ellipse cx="110.9" cy="232.5" rx="10.8" ry="5.6" fill="#66d67f" stroke="#06421f" stroke-width=".9"/>
<ellipse cx="145.4" cy="250.9" rx="10.9" ry="5.8999999999999995" fill="#06306f"/><path d="M129.5 242.9 V248.4 A10.4 5.6 0 0 0 150.3 248.4 V242.9 Z" fill="#2fa851" stroke="#06421f" stroke-width=".9"/><ellipse cx="139.9" cy="242.9" rx="10.4" ry="5.6" fill="#66d67f" stroke="#06421f" stroke-width=".9"/>
<ellipse cx="381.2" cy="214.6" rx="11.5" ry="6.3" fill="#06306f"/><path d="M364.7 206.5 V212.1 A11 6 0 0 0 386.7 212.1 V206.5 Z" fill="#2fa851" stroke="#06421f" stroke-width=".9"/><ellipse cx="375.7" cy="206.5" rx="11" ry="6" fill="#66d67f" stroke="#06421f" stroke-width=".9"/>
<ellipse cx="377.7" cy="236.29999999999998" rx="11.5" ry="6.3" fill="#06306f"/><path d="M361.2 231.2 V233.79999999999998 A11 6 0 0 0 383.2 233.79999999999998 V231.2 Z" fill="#2fa851" stroke="#06421f" stroke-width=".9"/><ellipse cx="372.2" cy="231.2" rx="11" ry="6" fill="#66d67f" stroke="#06421f" stroke-width=".9"/>
<ellipse cx="392.8" cy="269.7" rx="11.5" ry="6.3" fill="#06306f"/><path d="M376.3 260.8 V267.2 A11 6 0 0 0 398.3 267.2 V260.8 Z" fill="#2fa851" stroke="#06421f" stroke-width=".9"/><ellipse cx="387.3" cy="260.8" rx="11" ry="6" fill="#66d67f" stroke="#06421f" stroke-width=".9"/>
<ellipse cx="343.9" cy="233.3" rx="11.3" ry="5.8999999999999995" fill="#06306f"/><path d="M327.59999999999997 222.8 V230.8 A10.8 5.6 0 0 0 349.2 230.8 V222.8 Z" fill="#2fa851" stroke="#06421f" stroke-width=".9"/><ellipse cx="338.4" cy="222.8" rx="10.8" ry="5.6" fill="#66d67f" stroke="#06421f" stroke-width=".9"/>
<path d="M202.2 73.3 L308.8 92.4 L341.6 171.7 L263.3 179.1 L217.9 116.5 Z" fill="#ff92d4" stroke="#1a0012" stroke-width="1" stroke-linejoin="round"/>
<path d="M214.9 83.5 L302.1 99.0 L328.6 156.5 L308.1 167.2 L224.6 116.5 Z" fill="#7a0050"/>
<circle cx="192.9" cy="157.6" r="22.4" fill="#fff"/>
<circle cx="215.2" cy="136.0" r="22.7" fill="#fff"/>
<circle cx="251.0" cy="113.2" r="27.7" fill="#fff"/>
<circle cx="196.3" cy="159.8" r="22.4" fill="#66d67f"/>
<circle cx="218.6" cy="138.2" r="22.7" fill="#66d67f"/>
<circle cx="254.4" cy="115.4" r="27.7" fill="#66d67f"/>
<circle cx="287.2" cy="132.9" r="21.2" fill="#66d67f"/>
<circle cx="302.8" cy="159.0" r="20.0" fill="#66d67f"/>
<path d="M196.3 159.8 L218.6 138.2 L254.4 115.4 L287.2 132.9 L302.8 159.0 L321.5 179.1 L257.4 194.1 L203.7 179.1 L174.7 164.2 Z" fill="#66d67f"/>
<clipPath id="clp"><path d="M278.2 94.2 C269.5 97.4 283.1 103.9 285.7 109.1 C288.3 114.3 291.8 120.0 293.9 125.5 C296.0 131.0 296.4 136.9 298.4 141.9 C300.4 146.9 304.2 149.1 305.8 155.3 C307.4 161.5 302.8 175.1 308.1 179.1 C313.5 183.1 332.9 194.0 337.9 179.1 C342.9 164.2 347.8 103.8 337.9 89.7 C327.9 75.6 286.9 91.0 278.2 94.2 Z"/></clipPath>
<g clip-path="url(#clp)"><circle cx="287.2" cy="132.9" r="21.2" fill="#2fa851"/><circle cx="302.8" cy="159.0" r="20.0" fill="#2fa851"/><circle cx="254.4" cy="115.4" r="27.7" fill="#2fa851"/><path d="M287.2 132.9 L302.8 159.0 L321.5 179.1 L293.1 179.1 Z" fill="#2fa851"/></g>
<path d="M202.2 73.3 L223.1 56.2 L352.0 80.8 L308.8 92.4 Z" fill="#ff92d4" stroke="#1a0012" stroke-width="1" stroke-linejoin="round"/>
<path d="M211.5 72.7 L226.4 61.1 L311.0 79.6 L305.8 88.5 Z" fill="#ee3fa4"/>
<path d="M211.5 72.7 L218.6 68.8 L308.1 84.1 L305.8 88.5 Z" fill="#c4107c"/>
<path d="M203.7 72.7 L223.1 57.2 L230.5 59.2 L210.4 73.6 Z" fill="#fff"/>
<path d="M308.8 92.4 L352.0 80.8 L366.9 103.1 L365.4 141.9 L341.6 171.7 Z" fill="#ee3fa4" stroke="#1a0012" stroke-width="1" stroke-linejoin="round"/>
<path d="M315.8 90.9 L349.8 84.1 L360.5 104.3 L359.0 140.4 L344.1 156.5 Z" fill="#c4107c"/>
<path d="M242.8 110.6 C243.7 109.5 245.5 105.7 248.4 103.9 C251.3 102.2 256.7 100.3 260.4 100.1 C264.1 99.8 268.1 100.9 270.8 102.4 C273.5 103.9 275.9 106.5 276.8 109.1 C277.7 111.7 276.9 115.3 276.0 118.0 C275.1 120.7 272.2 124.2 271.5 125.5" fill="none" stroke="#06421f" stroke-width="6.6" stroke-linecap="round"/>
<path d="M242.8 110.6 C243.7 109.5 245.5 105.7 248.4 103.9 C251.3 102.2 256.7 100.3 260.4 100.1 C264.1 99.8 268.1 100.9 270.8 102.4 C273.5 103.9 275.9 106.5 276.8 109.1 C277.7 111.7 276.9 115.3 276.0 118.0 C275.1 120.7 272.2 124.2 271.5 125.5" fill="none" stroke="#2fa851" stroke-width="4.6" stroke-linecap="round"/>
<path d="M269.3 126.7 L257.4 132.9" fill="none" stroke="#06421f" stroke-width="1.6" stroke-linecap="round" stroke-linejoin="round"/>
<circle cx="236.5" cy="125.2" r="7.6" fill="#3dbb5f" stroke="#06421f" stroke-width=".9"/>
<circle cx="241.7" cy="128.2" r="7.8" fill="#2fa851" stroke="#06421f" stroke-width=".9"/>
<circle cx="246.2" cy="130.7" r="8" fill="#3dbb5f" stroke="#06421f" stroke-width=".9"/>
<circle cx="250.7" cy="134.0" r="9" fill="#3dbb5f" stroke="#06421f" stroke-width="1"/><circle cx="250.7" cy="134.0" r="5.8" fill="#2fa851" stroke="#06421f" stroke-width=".7"/><circle cx="250.7" cy="134.0" r="3" fill="#fff"/>
<path d="M248.1 151.6 L298.4 137.4 L304.3 162.8 L254.4 176.9 Z" fill="#c9f5d2" stroke="#06421f" stroke-width="1" stroke-linejoin="round"/>
<path d="M255.1 155.6 L293.9 144.6 L297.6 159.0 L259.6 170.2 Z" fill="#2fa851" stroke="#06421f" stroke-width="0.8" stroke-linejoin="round"/>
<path d="M259.4 154.4 L263.8 169.0" stroke="#66d67f" stroke-width=".8"/>
<path d="M263.7 153.2 L268.0 167.7" stroke="#66d67f" stroke-width=".8"/>
<path d="M268.0 151.9 L272.3 166.5" stroke="#66d67f" stroke-width=".8"/>
<path d="M272.3 150.7 L276.5 165.2" stroke="#66d67f" stroke-width=".8"/>
<path d="M276.7 149.5 L280.7 164.0" stroke="#66d67f" stroke-width=".8"/>
<path d="M281.0 148.3 L284.9 162.7" stroke="#66d67f" stroke-width=".8"/>
<path d="M285.3 147.0 L289.2 161.5" stroke="#66d67f" stroke-width=".8"/>
<path d="M289.6 145.8 L293.4 160.2" stroke="#66d67f" stroke-width=".8"/>
<path d="M256.6 160.5 L295.1 149.4" stroke="#66d67f" stroke-width=".8"/>
<path d="M258.1 165.3 L296.4 154.2" stroke="#66d67f" stroke-width=".8"/>
<path d="M186.6 142.6 L185.8 156.5" stroke="#06421f" stroke-width="9.4" stroke-linecap="round"/>
<path d="M186.6 142.6 L185.8 156.5" stroke="#2fa851" stroke-width="7.6" stroke-linecap="round"/>
<path d="M214.4 141.1 L219.8 152.6" stroke="#06421f" stroke-width="9.4" stroke-linecap="round"/>
<path d="M214.4 141.1 L219.8 152.6" stroke="#2fa851" stroke-width="7.6" stroke-linecap="round"/>
<path d="M192.5 132.9 L203.7 130.7 L206.7 140.4 L194.8 142.6 Z" fill="#2fa851" stroke="#06421f" stroke-width="0.8" stroke-linejoin="round"/>
<circle cx="186.6" cy="138.2" r="8.8" fill="#66d67f" stroke="#06421f" stroke-width="1"/>
<circle cx="211.9" cy="134.1" r="8.8" fill="#66d67f" stroke="#06421f" stroke-width="1"/>
<path d="M183.4 135.29999999999998 L188.20000000000002 140.1 M188.20000000000002 135.29999999999998 L183.4 140.1" stroke="#fff" stroke-width="1.6"/>
<circle cx="210.0" cy="131.7" r="1.5" fill="#fff"/><circle cx="213.7" cy="132.7" r="1.2" fill="#fff"/><circle cx="212.0" cy="135.79999999999998" r="1.2" fill="#fff"/>
<circle cx="194.0" cy="142.6" r="3.3" fill="#2fa851" stroke="#06421f" stroke-width=".9"/>
<circle cx="206.7" cy="141.1" r="3.3" fill="#2fa851" stroke="#06421f" stroke-width=".9"/>
<circle cx="230.20000000000002" cy="160.0" r="4.2" fill="#2fa851"/><circle cx="229.4" cy="159.0" r="3.9" fill="#66d67f" stroke="#06421f" stroke-width=".9"/>
<path d="M154.1 163.2 L170.5 160.7 L257.2 185.4 L337.4 169.7 L341.4 172.1 L256.2 190.0 Z" fill="#ee3fa4" stroke="#1a0012" stroke-width="0.9" stroke-linejoin="round"/>
<path d="M154.1 163.2 L256.2 190.0 L253.9 268.3 L160.0 234.0 Z" fill="#ff92d4" stroke="#1a0012" stroke-width="1" stroke-linejoin="round"/>
<path d="M162.6 173.6 L248.4 194.9 L247.5 258.1 L166.8 228.3 Z" fill="#c4107c"/>
<path d="M165.6 177.4 L248.4 198.2 L247.5 258.1 L168.2 228.9 Z" fill="#ee3fa4"/>
<path d="M256.2 190.0 L341.4 172.1 L329.5 245.9 L253.9 268.3 Z" fill="#ee3fa4" stroke="#1a0012" stroke-width="1" stroke-linejoin="round"/>
<path d="M262.7 197.0 L335.7 181.5 L325.3 241.2 L262.1 258.1 Z" fill="#a80b68"/>
<path d="M262.7 199.7 L332.5 184.8 L323.2 240.0 L262.7 255.8 Z" fill="#c4107c"/>
<path d="M190.3 197.5 L195.8 208.5 L193.3 215.5 L199.8 214.5 Z" fill="#c4107c"/>
<circle cx="201.8" cy="200.5" r="9.7" fill="#000"/>
<path d="M198.1 206.4 L205.1 206.4 L205.1 219.5 L194.0 216.1 Z" fill="#000"/>
<path d="M184.0 221.6 L188.3 232.6 L199.9 234.1 L190.8 241.5 L193.0 253.1 L183.1 246.7 L172.8 252.4 L175.8 241.0 L167.2 232.9 L179.0 232.2 Z" fill="#66d67f" stroke="#06421f" stroke-width="0.9" stroke-linejoin="round"/>
<ellipse cx="310.1" cy="259.6" rx="13.8" ry="6.4" fill="#06421f"/>
<ellipse cx="308.6" cy="257.8" rx="13.4" ry="6" fill="#3dbb5f" stroke="#06421f" stroke-width=".9"/>
<path d="M309.4 245.9 V255.2" stroke="#06421f" stroke-width="7.6"/><path d="M309.4 245.9 V255.2" stroke="#66d67f" stroke-width="5.6"/><path d="M307.79999999999995 245.9 V255.2" stroke="#fff" stroke-width="2"/>
<path d="M297.4 216.9 L307.4 236.7" stroke="#06421f" stroke-width="20" stroke-linecap="round"/>
<path d="M297.4 216.9 L307.4 236.7" stroke="#2fa851" stroke-width="18" stroke-linecap="round"/>
<path d="M291.5 214.6 L301.5 238.5" stroke="#fff" stroke-width="4.4" stroke-linecap="round"/>
<path d="M293.7 229.5 Q306.5 222.5 315.3 225.1" stroke="#06421f" stroke-width="1.4" fill="none"/>
<ellipse cx="285.1" cy="268.8" rx="11.3" ry="5.8999999999999995" fill="#06306f"/><path d="M268.8 259.3 V266.3 A10.8 5.6 0 0 0 290.40000000000003 266.3 V259.3 Z" fill="#2fa851" stroke="#06421f" stroke-width=".9"/><ellipse cx="279.6" cy="259.3" rx="10.8" ry="5.6" fill="#66d67f" stroke="#06421f" stroke-width=".9"/>
<ellipse cx="339.5" cy="281.3" rx="11.1" ry="5.8999999999999995" fill="#06306f"/><path d="M323.4 265.3 V278.8 A10.6 5.6 0 0 0 344.6 278.8 V265.3 Z" fill="#2fa851" stroke="#06421f" stroke-width=".9"/><ellipse cx="334.0" cy="265.3" rx="10.6" ry="5.6" fill="#66d67f" stroke="#06421f" stroke-width=".9"/>
</svg>
<!--ILLUS_END-->
  <div class="t" id="w6h" style="left:1343px;top:867px;font-size:24px;color:#1c1e21">Nova no streaming de jogos?</div>
  <div class="t" id="w6p" style="left:1343px;top:913px;font-size:14px;line-height:18px;color:#1c1e21;white-space:normal;width:480px">Saiba como fazer uma transmissão ao vivo e fazer um streaming da sua jogada com estas instruções detalhadas.</div>
<!--WIDGETS-->
</div>

</body>
</html>
